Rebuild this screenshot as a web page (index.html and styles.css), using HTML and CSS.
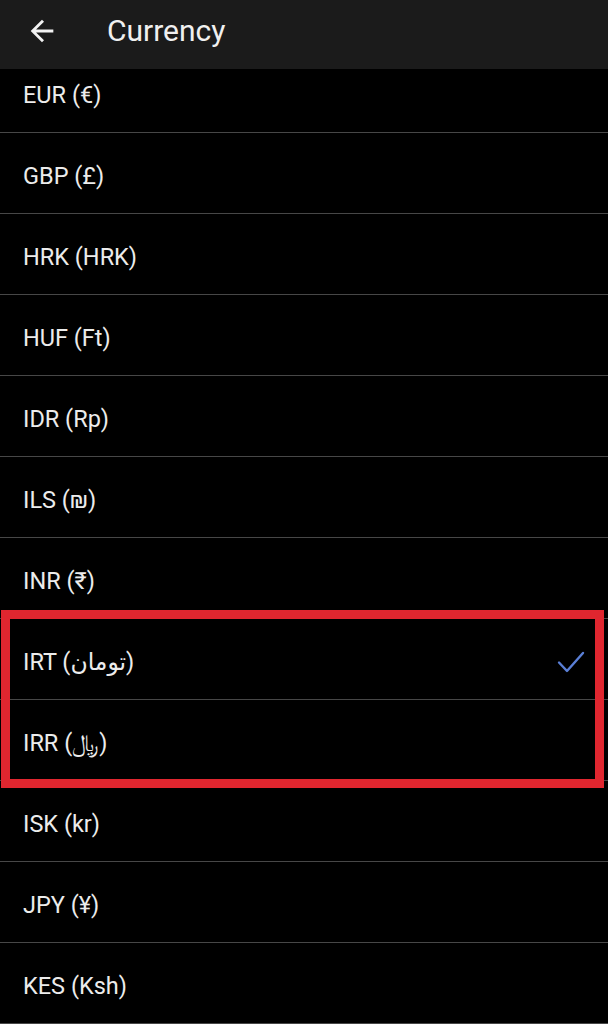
FILE: index.html
```html
<!doctype html>
<html lang="en">
  <head>
    <meta charset="UTF-8" />
    <meta name="viewport" content="width=device-width, initial-scale=1.0" />
    <title>Currency</title>
    <link rel="stylesheet" href="styles.css">
  </head>
  <body>
    <header class="app-bar">
      <button class="back-button" aria-label="Back">
        <svg viewBox="0 0 24 24" width="34" height="34">
          <path d="M20 11H7.83l5.59-5.59L12 4l-8 8 8 8 1.41-1.41L7.83 13H20v-2z" fill="currentColor" />
        </svg>
      </button>
      <h1>Currency</h1>
    </header>

    <div class="viewport">
      <ul class="currency-list">
        <li><span>EUR (€)</span></li>
        <li><span>GBP (£)</span></li>
        <li><span>HRK (HRK)</span></li>
        <li><span>HUF (Ft)</span></li>
        <li><span>IDR (Rp)</span></li>
        <li><span>ILS (₪)</span></li>
        <li><span>INR (₹)</span></li>
        <li class="selected">
          <span>IRT (<span dir="rtl" lang="fa">تومان</span>)</span>
          <svg class="check" viewBox="0 0 28 24" width="28" height="24">
            <path d="M2 12.5l8 8.5L26 3" fill="none" stroke="currentColor" stroke-width="2.4" stroke-linecap="round" stroke-linejoin="round" />
          </svg>
        </li>
        <li><span>IRR (<span lang="fa">﷼</span>)</span></li>
        <li><span>ISK (kr)</span></li>
        <li><span>JPY (¥)</span></li>
        <li><span>KES (Ksh)</span></li>
      </ul>

      <!-- annotation frame around the Iranian currencies -->
      <div class="highlight"></div>
    </div>
  </body>
</html>
```

FILE: styles.css
```css
:root {
  --color-bar: #1b1b1b;
  --color-background: #000;
  --color-text: #ececec;
  --color-divider: #474747;
  --color-accent: #5a7fd6;
  --color-mark: #e0262f;
  --row-height: 80px;
  --font-sans: Roboto, "DejaVu Sans", sans-serif;
}

html,
body {
  margin: 0;
  padding: 0;
  background: var(--color-background);
  font-family: var(--font-sans);
  color: var(--color-text);
  height: 1024px;
  overflow: hidden;
}

.app-bar {
  display: flex;
  align-items: center;
  height: 69px;
  box-sizing: border-box;
  padding: 0 0 8px 25px;
  background: var(--color-bar);
  position: relative;
  z-index: 1;
}

.back-button {
  display: flex;
  padding: 0;
  margin: 0 48px 0 0;
  border: none;
  background: none;
  color: #f2f2f2;
}

.app-bar h1 {
  margin: 0;
  font-size: 30px;
  font-weight: 400;
  color: #f0f0f0;
}

.viewport {
  position: relative;
  height: 955px;
  overflow: hidden;
}

.currency-list {
  list-style: none;
  margin: -17px 0 0;
  padding: 0;
}

.currency-list li {
  display: flex;
  align-items: center;
  justify-content: space-between;
  box-sizing: border-box;
  height: calc(var(--row-height) + 1px);
  padding: 6px 23px 0 23px;
  border-bottom: 1px solid var(--color-divider);
  font-size: 23.5px;
}

.check {
  color: var(--color-accent);
}

.highlight {
  position: absolute;
  left: 1px;
  right: 4px;
  top: 541px;
  height: 178px;
  border: 9px solid var(--color-mark);
  box-sizing: border-box;
  pointer-events: none;
}
```
